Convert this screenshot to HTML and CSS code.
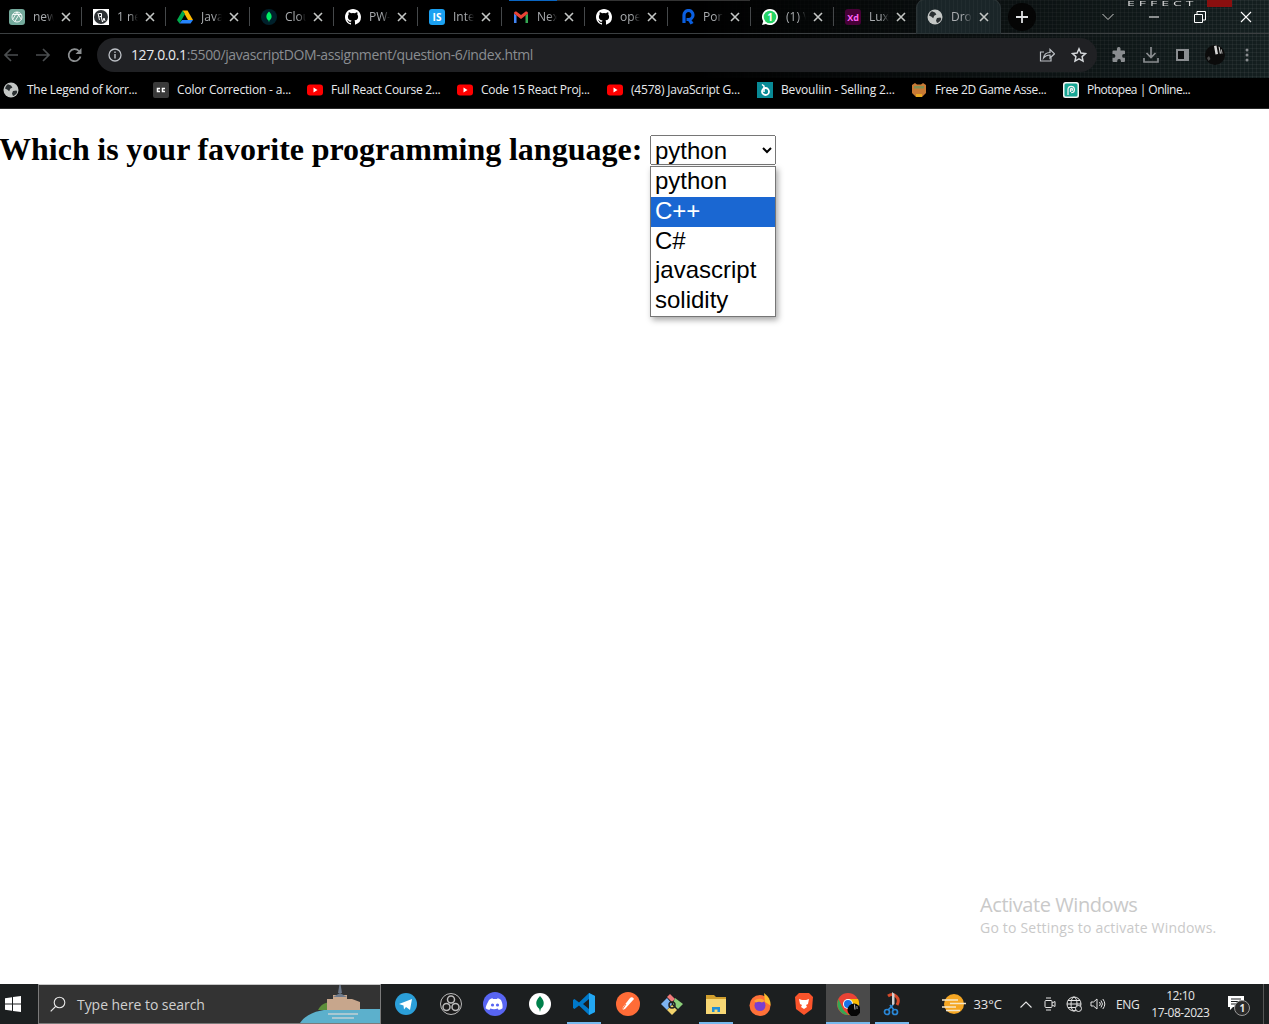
FILE: index.html
```html
<!DOCTYPE html>
<html lang="en">
<head>
    <meta charset="UTF-8">
    <title>Dropdown</title>
    <link rel="stylesheet" href="styles.css">
</head>
<body>

<svg class="defs" width="0" height="0">
    <defs>
        <symbol id="x" viewBox="0 0 10 10"><path d="M1 1l8 8M9 1l-8 8" stroke="#c4c7c5" stroke-width="1.6" fill="none"/></symbol>
        <symbol id="github" viewBox="0 0 16 16"><path fill="#fff" d="M8 0C3.58 0 0 3.58 0 8c0 3.54 2.29 6.53 5.47 7.59.4.07.55-.17.55-.38v-1.34c-2.23.48-2.7-1.07-2.7-1.07-.36-.92-.89-1.17-.89-1.17-.73-.5.05-.49.05-.49.8.06 1.23.83 1.23.83.71 1.22 1.87.87 2.33.66.07-.52.28-.87.51-1.07-1.78-.2-3.64-.89-3.64-3.95 0-.87.31-1.59.82-2.15-.08-.2-.36-1.02.08-2.12 0 0 .67-.21 2.2.82a7.6 7.6 0 0 1 4 0c1.53-1.04 2.2-.82 2.2-.82.44 1.1.16 1.92.08 2.12.51.56.82 1.27.82 2.15 0 3.07-1.87 3.75-3.65 3.95.29.25.54.73.54 1.48v2.2c0 .21.15.46.55.38A8 8 0 0 0 16 8c0-4.42-3.58-8-8-8z"/></symbol>
        <symbol id="globe" viewBox="0 0 16 16"><circle cx="8" cy="8" r="7.5" fill="#c4c7c5"/><path fill="#2a2f31" d="M5 2.2l3 1.2 1.4 2-2.2 1.4-1 2.4-2-1.6-2-.8c0-2 1.2-3.6 2.800-4.600zM10 9l3.500-.5.800 1.500c-.8 2-2.300 3.400-4.300 4l-1-2.500z"/></symbol>
        <symbol id="yt" viewBox="0 0 16 12"><rect width="16" height="11" y=".5" rx="3" fill="#f00"/><path d="M6.500 3.500v5l4-2.500z" fill="#fff"/></symbol>
    </defs>
</svg>

<header class="browser">
    <div class="progress"><span class="progress-blue"></span></div>
    <div class="wallpaper-text">EFFECT</div>
    <span class="wallpaper-red"></span>

    <div class="tabstrip">
        <div class="tab">
            <svg class="favicon" viewBox="0 0 16 16"><rect width="16" height="16" rx="3" fill="#74aa9c"/><g fill="none" stroke="#fff" stroke-width=".9"><circle cx="8" cy="8" r="5"/><path d="M8 3l4.300 7.500M3.700 10.500L8 3M3.700 5.500h8.600M5.800 12.500l4.300-7"/></g></svg>
            <span class="tab-title">new</span>
            <svg class="tab-close"><use href="#x"/></svg>
        </div>
        <div class="tab">
            <svg class="favicon" viewBox="0 0 16 16"><rect width="16" height="16" fill="#fff"/><circle cx="8" cy="8" r="7" fill="#2c3033"/><path d="M5 4l1.500 7M6 4.500h2.500v3H6.500M8 7l1.500 6 1.500-4 1 3" stroke="#fff" fill="none"/></svg>
            <span class="tab-title">1 ne</span>
            <svg class="tab-close"><use href="#x"/></svg>
        </div>
        <div class="tab">
            <svg class="favicon" viewBox="0 0 16 16"><path fill="#ffba00" d="M5.500 1.500h5L16 11h-5z"/><path fill="#00a94b" d="M5.500 1.500L0 11l2.500 3.500L8 5z"/><path fill="#2684fc" d="M5 11h11l-2.500 3.500H2.500z"/></svg>
            <span class="tab-title">Java</span>
            <svg class="tab-close"><use href="#x"/></svg>
        </div>
        <div class="tab">
            <svg class="favicon" viewBox="0 0 16 16"><circle cx="8" cy="8" r="8" fill="#00202b"/><path fill="#00ed64" d="M8 2.500c2 2 2.800 3.700 2.600 5.500-.2 1.800-1.500 3-2.200 3.500L8 13.500l-.4-2C6.800 11 5.500 9.800 5.400 8 5.200 6.200 6 4.500 8 2.500z"/></svg>
            <span class="tab-title">Clou</span>
            <svg class="tab-close"><use href="#x"/></svg>
        </div>
        <div class="tab">
            <svg class="favicon"><use href="#github"/></svg>
            <span class="tab-title">PW-</span>
            <svg class="tab-close"><use href="#x"/></svg>
        </div>
        <div class="tab">
            <svg class="favicon" viewBox="0 0 16 16"><rect width="16" height="16" rx="3" fill="#1ba1f2"/><text x="8" y="12" class="favicon-text">IS</text></svg>
            <span class="tab-title">Inte</span>
            <svg class="tab-close"><use href="#x"/></svg>
        </div>
        <div class="tab tab-narrow">
            <svg class="favicon" viewBox="0 0 16 16"><path fill="#4285f4" d="M1 14V4.500l2.500 2V14z"/><path fill="#34a853" d="M12.500 14V6.500l2.500-2V14z"/><path fill="#ea4335" d="M1 4.500C1 2.500 3 2 4 3l4 3 4-3c1-1 3-.5 3 1.500L12.500 6.500 8 10 3.500 6.500z"/></svg>
            <span class="tab-title">Nex</span>
            <svg class="tab-close"><use href="#x"/></svg>
        </div>
        <div class="tab tab-narrow">
            <svg class="favicon"><use href="#github"/></svg>
            <span class="tab-title">ope</span>
            <svg class="tab-close"><use href="#x"/></svg>
        </div>
        <div class="tab tab-narrow">
            <svg class="favicon" viewBox="0 0 16 16"><path fill="none" stroke="#0a5fe0" stroke-width="3.200" d="M5 14V6a4.500 4.500 0 1 1 4.500 4.500H7.500"/><path fill="#0a5fe0" d="M8 10l3-1 3.500 5-3 1.500z"/></svg>
            <span class="tab-title">Port</span>
            <svg class="tab-close"><use href="#x"/></svg>
        </div>
        <div class="tab tab-narrow">
            <svg class="favicon" viewBox="0 0 16 16"><path fill="#fff" d="M8 0a8 8 0 0 0-6.800 12.200L0 16l3.900-1.100A8 8 0 1 0 8 0z"/><circle cx="8" cy="8" r="6.300" fill="#25d366"/><text x="8" y="11.500" class="favicon-count">1</text></svg>
            <span class="tab-title">(1) V</span>
            <svg class="tab-close"><use href="#x"/></svg>
        </div>
        <div class="tab tab-narrow">
            <svg class="favicon" viewBox="0 0 16 16"><rect width="16" height="16" rx="3" fill="#470137"/><text x="8" y="11.500" class="favicon-xd">Xd</text></svg>
            <span class="tab-title">Lux</span>
            <svg class="tab-close"><use href="#x"/></svg>
        </div>
        <div class="tab tab-active">
            <svg class="favicon"><use href="#globe"/></svg>
            <span class="tab-title">Dro</span>
            <svg class="tab-close"><use href="#x"/></svg>
        </div>
        <div class="new-tab">
            <svg width="12" height="12" viewBox="0 0 12 12"><path d="M6 0v12M0 6h12" stroke="#dfe1e3" stroke-width="1.800"/></svg>
        </div>
        <div class="window-controls">
            <svg class="tab-search" width="12" height="8" viewBox="0 0 12 8"><path d="M.5 1l5.500 5.500L11.500 1" stroke="#ccc" fill="none"/></svg>
            <svg class="win-btn" width="12" height="12" viewBox="0 0 12 12"><path d="M1 6h10" stroke="#fff"/></svg>
            <svg class="win-btn" width="12" height="12" viewBox="0 0 12 12"><path d="M.5 3.500h8v8h-8zM3 3.500V.5h8.500v8.500H8.500" stroke="#fff" fill="none"/></svg>
            <svg class="win-btn" width="12" height="12" viewBox="0 0 12 12"><path d="M1 1l10 10M11 1L1 11" stroke="#fff" stroke-width="1.100"/></svg>
        </div>
    </div>

    <div class="toolbar">
        <svg class="nav-icon" viewBox="0 0 16 16"><path d="M15 8H2M8 2L2 8l6 6" stroke="#4b4e50" stroke-width="1.700" fill="none"/></svg>
        <svg class="nav-icon" viewBox="0 0 16 16"><path d="M1 8h13M8 2l6 6-6 6" stroke="#4b4e50" stroke-width="1.700" fill="none"/></svg>
        <svg class="nav-icon" viewBox="0 0 16 16"><path d="M13.500 9.500A6 6 0 1 1 12 4" stroke="#8c8f91" stroke-width="1.700" fill="none"/><path d="M14.500 1v6h-6z" fill="#8c8f91"/></svg>
        <div class="omnibox">
            <svg class="info-icon" viewBox="0 0 14 14"><circle cx="7" cy="7" r="6" fill="none" stroke="#bdc1c6" stroke-width="1.300"/><path d="M7 6v4.500M7 3.500v1.500" stroke="#bdc1c6" stroke-width="1.400"/></svg>
            <span class="url"><b>127.0.0.1</b>:5500/javascriptDOM-assignment/question-6/index.html</span>
            <svg class="omni-icon" viewBox="0 0 16 16"><path d="M12 10.500V14H1.500V5H5" fill="none" stroke="#bdc1c6" stroke-width="1.200"/><path d="M4.500 11c.5-3.500 3-5.500 6.500-5.500V2.500l4.500 4.300-4.500 4.200V8c-2.700 0-4.800.8-6.500 3z" fill="none" stroke="#bdc1c6" stroke-width="1.200"/></svg>
            <svg class="omni-icon" viewBox="0 0 16 16"><path d="M8 1.800l1.900 4.200 4.600.5-3.400 3.100.9 4.500-4-2.300-4 2.300.9-4.500-3.400-3.100 4.600-.5z" fill="none" stroke="#d5d8db" stroke-width="1.500"/></svg>
        </div>
        <svg class="tool-icon" viewBox="0 0 16 16"><path fill="#8a8d90" d="M6 1.500a1.800 1.800 0 0 1 3.500 0V3.500h3.500a1 1 0 0 1 1 1V7h-1a1.800 1.800 0 0 0 0 3.800h1V14a1 1 0 0 1-1 1h-3v-1a1.800 1.800 0 0 0-3.800 0v1H2.500a1 1 0 0 1-1-1v-3.200h1a1.800 1.800 0 0 0 0-3.800h-1V4.500a1 1 0 0 1 1-1H6z"/></svg>
        <svg class="tool-icon" viewBox="0 0 16 16"><path d="M8 0v10M3.500 6L8 10.500 12.500 6M1 11v4h14v-4" fill="none" stroke="#8a8d90" stroke-width="1.700"/></svg>
        <svg class="tool-icon" viewBox="0 0 16 16"><rect x="1" y="2" width="13" height="12" fill="#8a8d90"/><rect x="3" y="4" width="6" height="8" fill="#0a0c0d"/></svg>
        <svg class="avatar" viewBox="0 0 20 20"><circle cx="10" cy="10" r="10" fill="#0b0b0b"/><path d="M9 1l2.500-.5L13 9l-2.500.5zM13.500 1.500l1.200.5 1.300 6.500-1.200.3zM16 4l.8.7.7 3.800-.8.200z" fill="#d6d6d6"/><path d="M2 13l2-2 1.500 3-2 2z" fill="#4a4a4a"/></svg>
        <svg class="menu-icon" viewBox="0 0 4 16"><circle cx="2" cy="3" r="1.500" fill="#8a8d90"/><circle cx="2" cy="8" r="1.500" fill="#8a8d90"/><circle cx="2" cy="13" r="1.500" fill="#8a8d90"/></svg>
    </div>

    <div class="bookmarks">
        <div class="bookmark bm-korra"><svg class="bm-icon"><use href="#globe"/></svg>The Legend of Korr...</div>
        <div class="bookmark bm-color"><svg class="bm-icon" viewBox="0 0 16 16"><rect width="16" height="16" rx="2" fill="#3a3a3a"/><path d="M7 6.500H4.500v3H7M12 6.500H9.500v3H12" fill="none" stroke="#fff" stroke-width="1.500"/></svg>Color Correction - a...</div>
        <div class="bookmark bm-react"><svg class="bm-icon"><use href="#yt"/></svg>Full React Course 2...</div>
        <div class="bookmark bm-code"><svg class="bm-icon"><use href="#yt"/></svg>Code 15 React Proj...</div>
        <div class="bookmark bm-js"><svg class="bm-icon"><use href="#yt"/></svg>(4578) JavaScript G...</div>
        <div class="bookmark bm-bev"><svg class="bm-icon" viewBox="0 0 16 16"><rect width="16" height="16" fill="#088a96"/><path d="M5 2.500l2 1.500v6" fill="none" stroke="#fff" stroke-width="1.500"/><circle cx="8.500" cy="9.500" r="3.500" fill="none" stroke="#fff" stroke-width="1.800"/></svg>Bevouliin - Selling 2...</div>
        <div class="bookmark bm-free"><svg class="bm-icon" viewBox="0 0 16 16"><path fill="#c97a34" d="M1 3l3-2 2 1.500h4L12 1l3 2v8l-4 4H5l-4-4z"/><rect x="3" y="4" width="10" height="2.500" fill="#7f8f54"/><rect x="5" y="12" width="6" height="3" fill="#e8a820"/></svg>Free 2D Game Asse...</div>
        <div class="bookmark bm-photopea"><svg class="bm-icon" viewBox="0 0 16 16"><rect width="16" height="16" rx="2.500" fill="#f2f2f2"/><rect x="1.500" y="1.500" width="13" height="13" rx="1.500" fill="#17a594"/><path d="M5 13V7.500a3.200 3.200 0 1 1 3.200 3.200M7.500 10V7.500a1 1 0 1 1 1 1" fill="none" stroke="#f2f2f2" stroke-width="1.300"/></svg>Photopea | Online...</div>
    </div>
</header>

<main class="page">
    <h2 class="question">Which is your favorite programming language:
        <select class="lang-select">
            <option>python</option>
            <option>C++</option>
            <option>C#</option>
            <option>javascript</option>
            <option>solidity</option>
        </select>
    </h2>

    <ul class="lang-list">
        <li>python</li>
        <li class="selected">C++</li>
        <li>C#</li>
        <li>javascript</li>
        <li>solidity</li>
    </ul>

    <div class="watermark">
        <div class="watermark-title">Activate Windows</div>
        <div class="watermark-sub">Go to Settings to activate Windows.</div>
    </div>
</main>

<footer class="taskbar">
    <div class="start">
        <svg width="16" height="16" viewBox="0 0 16 16"><path fill="#fff" d="M0 2.300l7-1V7.500H0zM8 1.100L16 0v7.500H8zM0 8.500h7v6.200l-7-1zM8 8.500h8V16l-8-1.100z"/></svg>
    </div>
    <div class="search">
        <svg class="search-icon" viewBox="0 0 16 16"><circle cx="9.500" cy="6.500" r="5.300" fill="none" stroke="#e6e6e6" stroke-width="1.100"/><path d="M5.700 10.300L.7 15.300" stroke="#e6e6e6" stroke-width="1.200"/></svg>
        <span class="search-text">Type here to search</span>
        <svg class="search-art" viewBox="0 0 80 40"><path fill="#5cb0cc" d="M0 40c8-12 24-14 40-14h40v14z"/><path fill="#5c8f3a" d="M18 27c3-6 8-8 14-8v8z"/><path fill="#c7a68c" d="M27 27V16h6v-4h14v4h5l8 3v8z"/><path fill="#6d7a8c" d="M33 14l7-4 7 4z"/><path fill="#6d7a8c" d="M39.500 1h1L42 10h-4z"/><path fill="#a8c8d2" d="M28 30h30v2H28zM32 34h22v2H32z"/></svg>
    </div>
    <div class="task-icons">
        <div class="task-app"><svg class="app-icon" viewBox="0 0 22 22"><circle cx="11" cy="11" r="11" fill="#2b9fd9"/><path fill="#fff" d="M4 11l13-5-2 11-4-3-2 2.500-.5-4z"/></svg></div>
        <div class="task-app"><svg class="app-icon" viewBox="0 0 22 22"><circle cx="11" cy="11" r="10.500" fill="#1b1b1b" stroke="#bbb"/><circle cx="11" cy="6.500" r="3.500" fill="none" stroke="#bbb" stroke-width="1.500"/><circle cx="6.500" cy="14" r="3.500" fill="none" stroke="#bbb" stroke-width="1.500"/><circle cx="15.500" cy="14" r="3.500" fill="none" stroke="#bbb" stroke-width="1.500"/></svg></div>
        <div class="task-app"><svg class="app-icon app-big" viewBox="0 0 24 24"><circle cx="12" cy="12" r="12" fill="#5865f2"/><path fill="#fff" d="M6 8c2-1.500 3.500-1.700 3.500-1.700l.4.800c1.400-.3 2.800-.3 4.200 0l.4-.8s1.500.2 3.500 1.700c1.500 3 1.800 5.800 1.500 8.300-1.500 1.100-3 1.600-3.800 1.700l-.8-1.300-.1-.1c-2.500.8-5 .8-7.500 0l-.9 1.400c-.8-.1-2.300-.6-3.800-1.700C2.900 13.800 4.500 11 6 8z"/><circle cx="9.500" cy="13" r="1.600" fill="#5865f2"/><circle cx="14.500" cy="13" r="1.600" fill="#5865f2"/></svg></div>
        <div class="task-app"><svg class="app-icon" viewBox="0 0 22 22"><circle cx="11" cy="11" r="11" fill="#fff"/><path fill="#00804b" d="M11 3c3 3 4 5.500 3.700 8-.3 2.500-2 4-2.900 4.800L11 19l-.8-3.200C9.300 15 7.600 13.500 7.300 11 7 8.500 8 6 11 3z"/></svg></div>
        <div class="task-app running"><svg class="app-icon app-big" viewBox="0 0 24 24"><path fill="#0078c9" d="M17 1l6 3v16l-6 3-10-9.500L2.500 17 1 16v-8l1.500-1L7 10.500zM17 7l-6 5 6 5z"/><path fill="#23a7f2" d="M17 1l6 3v16l-6 3z"/></svg></div>
        <div class="task-app"><svg class="app-icon app-big" viewBox="0 0 24 24"><circle cx="12" cy="12" r="12" fill="#ff6c37"/><path d="M6 18l3-1 9-10c-1-2-3-2-4-1L7 15z" fill="#fff"/><path d="M6 18l4-6" stroke="#ff6c37"/></svg></div>
        <div class="task-app"><svg class="app-icon app-big" viewBox="0 0 24 24"><path fill="#7db3f0" d="M1 12l6-6 5 6-5 6z"/><path fill="#f07a7a" d="M7 5l3-3 5 5-3 3z"/><path fill="#8ccf7a" d="M15 6l8 6-5 5-5-5z"/><path fill="#f2d36b" d="M7 18l5-5 5 5-5 5z"/><circle cx="12" cy="13" r="3" fill="none" stroke="#222" stroke-width="1.500"/></svg></div>
        <div class="task-app running-split"><svg class="app-icon app-big" viewBox="0 0 24 24"><path fill="#d19f2e" d="M2 3h8l2 2h10v3H2z"/><path fill="#f7d774" d="M2 7h20v15H2z"/><path fill="#1f8fd8" d="M8 20v-5h8v5h-2.500v-2.500h-3V20z"/></svg></div>
        <div class="task-app"><svg class="app-icon app-big" viewBox="0 0 24 24"><circle cx="12" cy="13.500" r="10.500" fill="#ff7139"/><path fill="#ffbd2e" d="M16 1c4 3 7 7 6.500 12.500L17 10z"/><circle cx="12" cy="13.500" r="5.500" fill="#7a3fd1"/><path fill="#ffa436" d="M6 9c3-3 8-3 11 0l-3 1.500c-2-1-4-1-6 0z"/></svg></div>
        <div class="task-app"><svg class="app-icon app-big" viewBox="0 0 24 24"><path fill="#fb542b" d="M7 1h10l4 4-1 12-8 6-8-6-1-12z"/><path fill="#fff" d="M7 7l3 1h4l3-1-1 5-2 1 1 2-3 2-3-2 1-2-2-1z"/></svg></div>
        <div class="task-app active"><svg class="app-icon app-big" viewBox="0 0 24 24"><circle cx="12" cy="12" r="11" fill="#ea4335"/><path fill="#34a853" d="M2.500 7l5 11 5 5A11 11 0 0 1 2.500 7z"/><path fill="#fbbc05" d="M12 7h10a11 11 0 0 1-9.500 16l4-8z"/><circle cx="12" cy="12" r="5" fill="#fff"/><circle cx="12" cy="12" r="4" fill="#1a73e8"/><circle cx="18" cy="18" r="6.500" fill="#060606"/><path d="M18 12.500h1l.5 5h-1zM20.500 14h.8l.2 3h-.8z" fill="#ccc"/></svg></div>
        <div class="task-app running"><svg class="app-icon app-big" viewBox="0 0 24 24"><path d="M8 4c6-4 13 2 9 9" fill="none" stroke="#d64a2a" stroke-width="3"/><path d="M12 0v14l2.500-2V2z" fill="#d0d0d0"/><path d="M13 13l-5 5M10 13l4 5" stroke="#2a88d8" stroke-width="1.700"/><circle cx="7" cy="20" r="2.500" fill="none" stroke="#2a88d8" stroke-width="1.700"/><circle cx="15" cy="20" r="2.500" fill="none" stroke="#2a88d8" stroke-width="1.700"/></svg></div>
    </div>
    <div class="tray">
        <svg class="weather" viewBox="0 0 24 20"><circle cx="12" cy="10" r="10" fill="#f5a623"/><path d="M0 6h16M8 9.500h16M0 13h14M4 16.500h14" stroke="#f6e7c8" stroke-width="1.300"/></svg>
        <span class="temp">33°C</span>
        <svg class="tray-chevron" width="12" height="7" viewBox="0 0 12 7"><path d="M.5 6.500L6 1l5.500 5.500" stroke="#e6e6e6" stroke-width="1.100" fill="none"/></svg>
        <svg class="tray-icon tray-first" viewBox="0 0 16 16"><rect x="3" y="4.500" width="7" height="7" rx="1" fill="none" stroke="#e6e6e6"/><path d="M10 7l3-1.500v5L10 9M4 2h5M4 14h5" fill="none" stroke="#e6e6e6"/></svg>
        <svg class="tray-icon" viewBox="0 0 16 16"><circle cx="8" cy="8" r="7" fill="none" stroke="#e6e6e6"/><ellipse cx="8" cy="8" rx="3" ry="7" fill="none" stroke="#e6e6e6"/><path d="M1 8h14M2 4.500h12M2 11.500h12" stroke="#e6e6e6"/><circle cx="12.500" cy="12.500" r="3" fill="#1c1f20" stroke="#e6e6e6"/></svg>
        <svg class="tray-icon" viewBox="0 0 16 16"><path d="M1 6v4h2.500L7 13V3L3.500 6zM9.500 6a3 3 0 0 1 0 4M11 4.500a5.500 5.500 0 0 1 0 7M12.800 3a8 8 0 0 1 0 10" fill="none" stroke="#e6e6e6"/></svg>
        <span class="lang">ENG</span>
        <div class="clock"><span>12:10</span><span>17-08-2023</span></div>
        <div class="notify">
            <svg width="16" height="15" viewBox="0 0 16 15"><path fill="#fff" d="M0 0h16v11H5l-3 3v-3H0z"/><path d="M3 3h10M3 5.500h10M3 8h7" stroke="#1c1f20"/></svg>
            <span class="notify-badge">1</span>
        </div>
        <span class="show-desktop"></span>
    </div>
</footer>

</body>
</html>
```

FILE: styles.css
```css
* {
    box-sizing: border-box;
}

html, body {
    margin: 0;
    padding: 0;
}

body {
    width: 1269px;
    height: 1024px;
    overflow: hidden;
    display: flex;
    flex-direction: column;
    background-color: white;
    font-family: "Open Sans", "Noto Sans", sans-serif;
}

.defs {
    display: none;
}

/* browser frame */
.browser {
    position: relative;
    height: 109px;
    flex-shrink: 0;
    color: #e8eaed;
    background-color: #000;
    border-bottom: 1px solid #2a2a2a;
}

/* wallpaper grid showing through the frame on the right */
.browser::before {
    content: "";
    position: absolute;
    top: 0;
    left: 0;
    width: 100%;
    height: 78px;
    pointer-events: none;
    background-color: rgba(28, 44, 46, 0.7);
    background-image:
        repeating-linear-gradient(to right, rgba(255, 255, 255, 0.05) 0 1px, transparent 1px 4px),
        repeating-linear-gradient(to bottom, rgba(255, 255, 255, 0.05) 0 1px, transparent 1px 4px);
    -webkit-mask-image: linear-gradient(to right, transparent 55%, #000 100%);
    mask-image: linear-gradient(to right, transparent 55%, #000 100%);
}

.progress {
    position: absolute;
    top: 0;
    left: 509px;
    width: 241px;
    height: 1px;
    background-color: #333;
}

.progress-blue {
    display: block;
    width: 48px;
    height: 1px;
    background-color: #0a66c2;
}

.wallpaper-text {
    position: absolute;
    top: 0;
    left: 1127px;
    font-size: 7px;
    line-height: 7px;
    letter-spacing: 2px;
    white-space: nowrap;
    color: #dcdcdc;
    transform: scaleX(2);
    transform-origin: left top;
}

.wallpaper-red {
    position: absolute;
    top: 0;
    left: 1207px;
    width: 25px;
    height: 7px;
    background-color: #8a0f0f;
}

.tabstrip {
    position: relative;
    display: flex;
    align-items: center;
    height: 34px;
    border-bottom: 1px solid #3b3f41;
}

.tab {
    display: flex;
    align-items: center;
    width: 84px;
    height: 33px;
    padding-left: 9px;
    flex-shrink: 0;
}

.tab::after {
    content: "";
    width: 1px;
    height: 19px;
    margin-left: 10px;
    margin-right: 2px;
    flex-shrink: 0;
    background-color: #45484a;
}

.tab-narrow {
    width: 83px;
}

.tab-active {
    width: 83px;
    margin-left: -2px;
    padding-left: 10px;
    border-radius: 8px 8px 0 0;
    background-color: #1a2528;
    background-image: repeating-linear-gradient(to right, rgba(255, 255, 255, 0.03) 0 1px, transparent 1px 4px);
    box-shadow: 0 0 0 1px #2c3537;
}

.tab-active::after {
    margin-left: 8px;
    background-color: transparent;
}

.favicon {
    width: 16px;
    height: 16px;
    flex-shrink: 0;
}

.favicon-text {
    font-size: 10px;
    font-weight: 700;
    text-anchor: middle;
    fill: #fff;
}

.favicon-count {
    font-size: 10px;
    font-weight: 700;
    text-anchor: middle;
    fill: #fff;
}

.favicon-xd {
    font-size: 9px;
    font-weight: 700;
    text-anchor: middle;
    fill: #ff61f6;
}

/* the mask cuts the title at the box edge, like the browser's fade */
.tab-title {
    flex: 1;
    min-width: 0;
    margin-left: 8px;
    margin-right: 7px;
    font-size: 12px;
    line-height: 16px;
    white-space: nowrap;
    color: #a9acaf;
    -webkit-mask-image: linear-gradient(to right, #000 60%, transparent 100%);
    mask-image: linear-gradient(to right, #000 60%, transparent 100%);
}

.tab-close {
    width: 10px;
    height: 10px;
    flex-shrink: 0;
}

.new-tab {
    display: flex;
    align-items: center;
    justify-content: center;
    width: 28px;
    height: 28px;
    margin-left: 8px;
    flex-shrink: 0;
    border-radius: 50%;
    background-color: #050505;
}

.window-controls {
    display: flex;
    align-items: center;
    margin-left: 66px;
    flex-shrink: 0;
    height: 30px;
}

.tab-search {
    margin-right: 34px;
}

.win-btn {
    margin-right: 34px;
}

/* address bar row */
.toolbar {
    position: relative;
    display: flex;
    align-items: center;
    height: 42px;
    padding-left: 3px;
}

.nav-icon {
    width: 16px;
    height: 16px;
    margin-right: 16px;
    flex-shrink: 0;
}

.omnibox {
    display: flex;
    align-items: center;
    width: 1000px;
    height: 34px;
    margin-left: -2px;
    padding-left: 11px;
    flex-shrink: 0;
    border-radius: 17px;
    background-color: #202124;
}

.info-icon {
    width: 14px;
    height: 14px;
    flex-shrink: 0;
}

.url {
    flex: 1;
    margin-left: 9px;
    font-size: 14px;
    line-height: 20px;
    letter-spacing: -0.38px;
    color: #8a8d91;
}

.url b {
    font-weight: 400;
    color: #e8eaed;
}

.omni-icon {
    width: 16px;
    height: 16px;
    margin-right: 16px;
    flex-shrink: 0;
}

.omni-icon:last-child {
    margin-right: 10px;
}

.tool-icon {
    width: 16px;
    height: 16px;
    margin-left: 14px;
    margin-right: 2px;
    flex-shrink: 0;
}

.avatar {
    width: 20px;
    height: 20px;
    margin-left: 12px;
    flex-shrink: 0;
}

.menu-icon {
    width: 4px;
    height: 16px;
    margin-left: 20px;
    flex-shrink: 0;
}

/* bookmarks */
.bookmarks {
    position: relative;
    display: flex;
    align-items: center;
    height: 28px;
    padding-left: 3px;
}

.bookmark {
    display: flex;
    align-items: center;
    font-size: 12px;
    line-height: 16px;
    letter-spacing: -0.28px;
    white-space: nowrap;
    color: #e8eaed;
}

.bm-icon {
    width: 16px;
    height: 16px;
    margin-right: 8px;
    flex-shrink: 0;
}

.bm-korra { width: 150px; }
.bm-color { width: 154px; letter-spacing: -0.18px; }
.bm-react { width: 150px; }
.bm-code { width: 150px; }
.bm-js { width: 150px; letter-spacing: -0.2px; }
.bm-bev { width: 154px; letter-spacing: -0.15px; }
.bm-free { width: 152px; letter-spacing: -0.33px; }
.bm-photopea { letter-spacing: -0.5px; }

/* page content */
.page {
    position: relative;
    flex: 1;
    min-height: 0;
}

.question {
    margin: 22px 0 0 -1px;
    font-family: "Liberation Serif", serif;
    font-size: 32px;
    font-weight: 700;
    line-height: 37px;
    word-spacing: -0.35px;
    color: #000;
    white-space: nowrap;
}

.lang-select {
    width: 126px;
    height: 30px;
    padding-left: 0;
    font-family: "Liberation Sans", sans-serif;
    font-size: 24px;
    vertical-align: 1px;
}

.lang-list {
    position: absolute;
    top: 57px;
    left: 650px;
    width: 126px;
    margin: 0;
    padding: 0;
    list-style: none;
    font-family: "Liberation Sans", sans-serif;
    font-size: 24px;
    background-color: white;
    border: 1px solid #767676;
    box-shadow: 2px 3px 6px rgba(0, 0, 0, 0.35);
}

.lang-list li {
    height: 29.8px;
    padding-left: 4px;
    line-height: 28px;
    color: #000;
}

.lang-list .selected {
    background-color: #1a67d2;
    color: white;
}

.watermark {
    position: absolute;
    left: 980px;
    top: 784px;
    color: #c9c9c9;
    white-space: nowrap;
}

.watermark-title {
    font-size: 20px;
    line-height: 24px;
    letter-spacing: -0.42px;
}

.watermark-sub {
    font-size: 14px;
    line-height: 22px;
    letter-spacing: 0.2px;
}

/* taskbar */
.taskbar {
    display: flex;
    align-items: stretch;
    height: 40px;
    flex-shrink: 0;
    background-color: #1c1f20;
}

.start {
    display: flex;
    align-items: center;
    justify-content: center;
    width: 38px;
    padding-right: 12px;
    flex-shrink: 0;
}

.search {
    position: relative;
    display: flex;
    align-items: center;
    width: 343px;
    padding-left: 11px;
    flex-shrink: 0;
    overflow: hidden;
    background-color: #333;
    border: 1px solid #7a7a7a;
    border-top-color: #c8c8c8;
}

.search-icon {
    width: 16px;
    height: 16px;
    flex-shrink: 0;
}

.search-text {
    margin-left: 11px;
    font-size: 14px;
    letter-spacing: -0.05px;
    color: #d0d0d0;
}

.search-art {
    position: absolute;
    right: 0;
    bottom: 0;
    width: 80px;
    height: 40px;
}

.task-icons {
    display: flex;
    flex-shrink: 0;
    margin-left: 2.65px;
}

.task-app {
    position: relative;
    display: flex;
    align-items: center;
    justify-content: center;
    width: 44px;
}

.task-app:nth-child(-n+4) {
    width: 44.7px;
}

.app-icon {
    width: 22px;
    height: 22px;
}

.app-big {
    width: 24px;
    height: 24px;
}

.running::after,
.running-split::after,
.active::after {
    content: "";
    position: absolute;
    bottom: 0;
    left: 5px;
    right: 5px;
    height: 2px;
    background-color: #76b9ed;
}

.active {
    background-color: #4a4a4a;
}

.active::after {
    left: 0;
    right: 0;
}

.tray {
    display: flex;
    align-items: center;
    flex: 1;
    min-width: 0;
    margin-left: 28px;
    color: #e6e6e6;
    font-size: 12px;
}

.weather {
    width: 24px;
    height: 20px;
    flex-shrink: 0;
}

.temp {
    margin-left: 7px;
    font-size: 13px;
}

.tray-chevron {
    margin-left: 18px;
    flex-shrink: 0;
}

.tray-icon {
    width: 16px;
    height: 16px;
    margin-left: 8px;
    flex-shrink: 0;
}

.tray-first {
    margin-left: 10px;
}

.lang {
    margin-left: 10px;
    letter-spacing: -0.4px;
}

.clock {
    display: flex;
    flex-direction: column;
    align-items: center;
    margin-left: 12px;
    line-height: 17px;
    letter-spacing: -0.45px;
}

.notify {
    position: relative;
    margin-left: 19px;
    height: 16px;
}

.notify-badge {
    position: absolute;
    top: 4px;
    left: 6px;
    width: 16px;
    height: 16px;
    border: 1px solid #9a9a9a;
    border-radius: 50%;
    font-size: 10px;
    font-weight: 700;
    line-height: 14px;
    text-align: center;
    background-color: #2a2a2a;
}

.show-desktop {
    width: 1px;
    height: 40px;
    margin-left: 19px;
    background-color: #555;
}
```
